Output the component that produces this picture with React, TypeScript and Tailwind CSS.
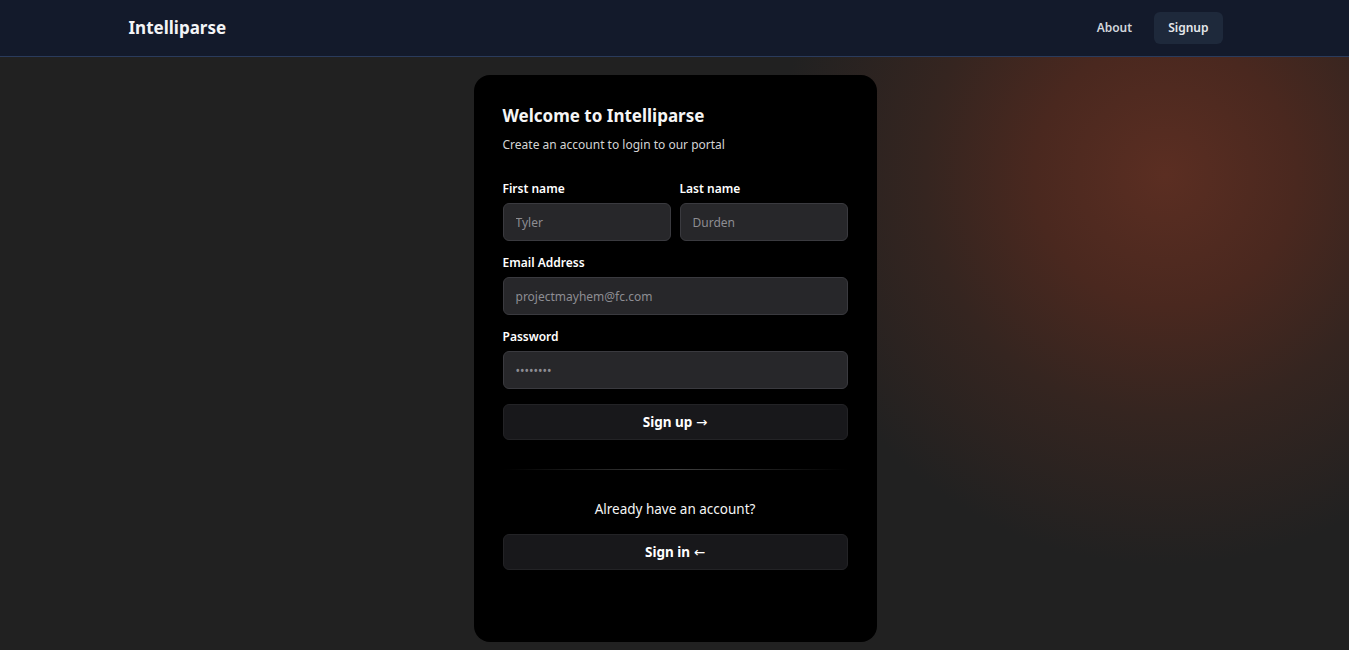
import React, { useState } from "react";

const inputCls =
  "w-full h-[38px] px-3 rounded-md bg-[#27272a] border border-[#3a3a3f] text-[12px] text-neutral-200 placeholder:text-[#8d8d93] focus:outline-none";

const labelCls = "block text-[12px] leading-4 font-semibold mb-[6px]";

const App: React.FC = () => {
  const [firstName, setFirstName] = useState("");
  const [lastName, setLastName] = useState("");
  const [email, setEmail] = useState("");
  const [password, setPassword] = useState("");

  return (
    <div className="min-h-screen bg-[#212121] bg-[radial-gradient(circle_at_1165px_175px,#5b2e22_0px,#4a281f_130px,#352520_240px,#212121_390px)] font-['Noto_Sans',sans-serif] text-white">
      {/* Navbar */}
      <nav className="h-[57px] bg-[#131a2b] border-b border-[#2a3b5c]">
        <div className="max-w-6xl mx-auto h-full px-7 flex items-center justify-between">
          <span className="text-[17px] font-bold text-gray-100 pl-[2px]">Intelliparse</span>
          <div className="flex items-center gap-[22px]">
            <a className="text-[12px] font-semibold text-gray-300">About</a>
            <a className="h-8 px-[14px] flex items-center rounded-md bg-[#1e293b] text-[12px] font-semibold text-gray-200">
              Signup
            </a>
          </div>
        </div>
      </nav>

      <div className="flex justify-center pt-[18px] pl-px">
        <div className="w-[403px] h-[567px] bg-black rounded-2xl px-[29px] pt-[29px]">
          <h2 className="text-[17px] font-bold text-neutral-100 leading-6">Welcome to Intelliparse</h2>
          <p className="mt-[7px] text-[12px] leading-5 text-neutral-300">Create an account to login to our portal</p>

          <form className="mt-[26px]" onSubmit={(e) => e.preventDefault()}>
            <div className="flex gap-[9px]">
              <div className="flex-1">
                <label className={labelCls}>First name</label>
                <input
                  className={inputCls}
                  placeholder="Tyler"
                  value={firstName}
                  onChange={(e) => setFirstName(e.target.value)}
                />
              </div>
              <div className="flex-1">
                <label className={labelCls}>Last name</label>
                <input
                  className={inputCls}
                  placeholder="Durden"
                  value={lastName}
                  onChange={(e) => setLastName(e.target.value)}
                />
              </div>
            </div>

            <div className="mt-[14px]">
              <label className={labelCls}>Email Address</label>
              <input
                className={inputCls}
                placeholder="projectmayhem@fc.com"
                value={email}
                onChange={(e) => setEmail(e.target.value)}
              />
            </div>

            <div className="mt-[14px]">
              <label className={labelCls}>Password</label>
              <input
                type="password"
                className={inputCls}
                placeholder="••••••••"
                value={password}
                onChange={(e) => setPassword(e.target.value)}
              />
            </div>

            <button
              type="submit"
              className="mt-[15px] w-full h-9 rounded-md bg-[#18181b] border border-[#232326] text-[13.5px] font-bold text-white"
            >
              Sign up <span className="font-['DejaVu_Sans',sans-serif] font-normal">→</span>
            </button>
          </form>

          <div className="mt-[29px] h-px bg-gradient-to-r from-transparent via-neutral-700 to-transparent" />

          <p className="mt-[29px] text-center text-[13.5px] leading-5 text-neutral-100">Already have an account?</p>

          <button className="mt-[15px] w-full h-9 rounded-md bg-[#18181b] border border-[#232326] text-[13.5px] font-bold text-white">
            Sign in <span className="font-['DejaVu_Sans',sans-serif] font-normal">←</span>
          </button>
        </div>
      </div>
    </div>
  );
};

export default App;
